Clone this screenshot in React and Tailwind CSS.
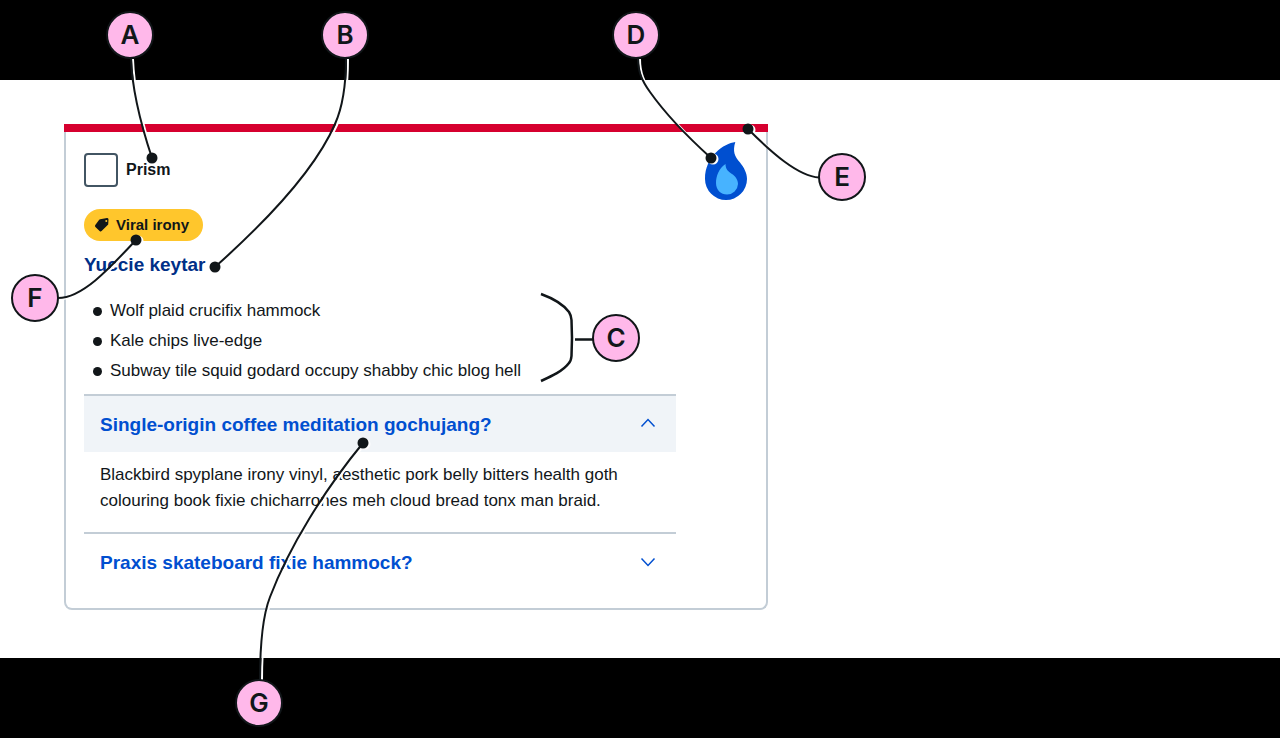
import { useState } from "react";

const features = [
  "Wolf plaid crucifix hammock",
  "Kale chips live-edge",
  "Subway tile squid godard occupy shabby chic blog hell",
];

const questions = [
  {
    id: "coffee",
    title: "Single-origin coffee meditation gochujang?",
    body: "Blackbird spyplane irony vinyl, aesthetic pork belly bitters health goth colouring book fixie chicharrones meh cloud bread tonx man braid.",
  },
  {
    id: "praxis",
    title: "Praxis skateboard fixie hammock?",
    body: "Church-key pinterest letterpress.",
  },
];

// Leader lines run from each marker to the part of the card it names.
const leaders = [
  { d: "M131 58C132 92 142 128 152 158", dot: [152, 158] },
  { d: "M346 58C346 82 344 104 335 124C316 168 270 218 215 267", dot: [215, 267] },
  { d: "M638 58C638 72 642 81 650 92C667 116 690 139 711 158", dot: [711, 158] },
  { d: "M819 177.500C798 176 772 153 748 129", dot: [748, 129] },
  { d: "M58 298C82 298 108 270 136 240", dot: [136, 240] },
  { d: "M260 680C260 652 261 620 270 597C289 547 325 489 363 443", dot: [363, 443] },
];

const markers = [
  { label: "A", place: "left-[106px] top-[11px]" },
  { label: "B", place: "left-[321px] top-[11px]" },
  { label: "C", place: "left-[592px] top-[314px]" },
  { label: "D", place: "left-[612px] top-[11px]" },
  { label: "E", place: "left-[818px] top-[153px]" },
  { label: "F", place: "left-[11px] top-[274px]" },
  { label: "G", place: "left-[235px] top-[679px]" },
];

function Flame() {
  return (
    <svg className="h-[60px] w-11 shrink-0" viewBox="0 0 44 60" aria-hidden="true">
      <path
        fill="#004fd0"
        d="M31.300 0C20 1.500 1 14 1 37A21 21 0 0 0 43 37C43 31 40 25.500 36 20.500C30.500 14 28.500 9.500 31.300 0Z"
      />
      <path
        fill="#47b3ff"
        d="M21.500 22C15 26 12 34 12 41C12 48 17 52.500 23 52.500A11 11 0 0 0 34 42C34 37.500 31 34 28 32C24 29.500 21.500 27 21.500 22Z"
      />
    </svg>
  );
}

function TagIcon() {
  return (
    <svg className="h-4 w-4" viewBox="0 0 16 16" aria-hidden="true">
      <path
        fill="#111619"
        fillRule="evenodd"
        d="M6.200 2.200L13 1Q14.600 .8 14.500 2.500L14.200 7.600L7.600 14.100Q6.600 15 5.600 14L1.400 9.900Q.6 9 1.300 8L5 3Q5.500 2.300 6.200 2.200ZM12.300 3A1 1 0 1 0 12.300 5A1 1 0 1 0 12.300 3Z"
      />
    </svg>
  );
}

function Chevron({ open }) {
  return (
    <svg className="h-4 w-4" viewBox="0 0 16 16" fill="none" stroke="#004fd0" strokeWidth="1.500" aria-hidden="true">
      <path d={open ? "M1.500 9.500L8 2.500L14.500 9.500" : "M1.500 3.500L8 10.500L14.500 3.500"} />
    </svg>
  );
}

function Accordion() {
  const [openId, setOpenId] = useState("coffee");
  return (
    <div className="mt-2">
      {questions.map((q) => {
        const open = q.id === openId;
        return (
          <section key={q.id} className="border-t-2 border-[#c3cdd6]">
            <h3>
              <button
                type="button"
                aria-expanded={open}
                aria-controls={q.id}
                onClick={() => setOpenId(open ? null : q.id)}
                className={`flex h-14 w-full items-center justify-between pt-0.5 pr-5 pl-4 text-left text-[19px] font-bold text-[#004fd0] ${open ? "bg-[#f0f4f8]" : ""}`}
              >
                {q.title}
                <Chevron open={open} />
              </button>
            </h3>
            <p id={q.id} hidden={!open} className="px-4 pt-[10px] pb-[18px] text-[17px] leading-[26px]">
              {q.body}
            </p>
          </section>
        );
      })}
    </div>
  );
}

function Card() {
  return (
    <article className="max-w-[704px]">
      <div className="h-2 bg-[#d6002f]" />
      <div className="flex gap-7 rounded-b-lg border-2 border-t-0 border-[#c3cdd6] px-[18px] pt-[10px] pb-[18px]">
        <div className="min-w-0 flex-1 pt-[11px]">
          <label className="flex items-center gap-2 text-base font-bold">
            <input
              type="checkbox"
              className="h-[34px] w-[34px] appearance-none rounded border-2 border-[#425563] bg-white checked:bg-[#425563]"
            />
            Prism
          </label>
          <div className="mt-[22px] flex">
            <span className="flex h-8 items-center gap-1.5 rounded-full bg-[#ffc62c] pr-[14px] pl-[10px] text-[15px] font-bold">
              <TagIcon />
              Viral irony
            </span>
          </div>
          <h2 className="mt-2 text-[19px] leading-8 font-bold text-[#002f87]">Yuccie keytar</h2>
          <ul className="mt-[15px] text-[17px] leading-[30px]">
            {features.map((feature) => (
              <li key={feature} className="flex items-center gap-2 pl-[9px]">
                <span className="h-[9px] w-[9px] rounded-full bg-[#111619]" />
                {feature}
              </li>
            ))}
          </ul>
          <Accordion />
        </div>
        <Flame />
      </div>
    </article>
  );
}

function Annotations() {
  return (
    <div className="pointer-events-none absolute top-0 left-0 font-[Inter,sans-serif]">
      <svg className="block" width="880" height="738" viewBox="0 0 880 738" fill="none" aria-hidden="true">
        {leaders.map(({ d, dot }) => (
          <g key={d}>
            <g transform="translate(2 1)">
              <path d={d} stroke="#fff" strokeWidth="2" />
              <circle cx={dot[0]} cy={dot[1]} r="5.500" fill="#fff" />
            </g>
            <path d={d} stroke="#111619" strokeWidth="2" />
            <circle cx={dot[0]} cy={dot[1]} r="5.500" fill="#111619" />
          </g>
        ))}
        <path
          d="M541 294C552 298 563 304 569 312Q571 315 571.500 320Q572.500 338 571.500 356Q571 361 569 363C563 371 552 376 541 381M575 339.500H593"
          stroke="#111619"
          strokeWidth="2.500"
        />
      </svg>
      {markers.map(({ label, place }) => (
        <span
          key={label}
          className={`absolute flex h-12 w-12 items-center justify-center rounded-full border-2 border-[#111619] bg-[#ffb8ea] text-[26px] leading-none font-semibold ${place}`}
        >
          {label}
        </span>
      ))}
    </div>
  );
}

export default function App() {
  return (
    <main className="relative min-h-screen bg-black py-20 font-['Liberation_Sans',Arial,sans-serif] text-[#111619]">
      <div className="bg-white px-16 pt-11 pb-12">
        <Card />
      </div>
      <Annotations />
    </main>
  );
}
